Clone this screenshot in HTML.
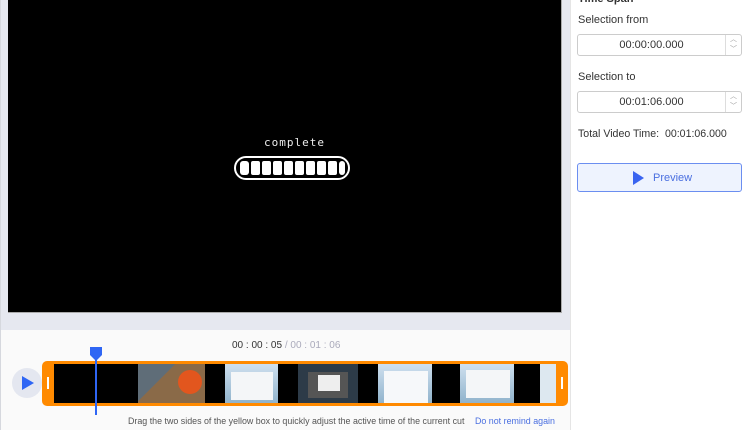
<!DOCTYPE html>
<html><head><style>
*{margin:0;padding:0;box-sizing:border-box}
body{width:750px;height:430px;overflow:hidden;background:#fff;font-family:"Liberation Sans",sans-serif;position:relative}
.abs{position:absolute}
.lbl{font-size:11px;color:#333}
.inp{position:absolute;left:577px;width:165px;height:22px;border:1px solid #ccc;border-radius:3px;background:#fff;font-size:11px;color:#333}
.inp span{position:absolute;left:0;width:147px;top:4px;text-align:center}
.inp i{position:absolute;right:0;top:0;width:16px;height:20px;border-left:1px solid #ddd;font-style:normal;font-size:7px;color:#999;line-height:10px;text-align:center}
</style></head><body>
<div class="abs" style="left:0;top:0;width:570px;height:330px;background:#e6e8f0;border-left:1px solid #d6d8de"></div>
<div class="abs" style="left:0;top:330px;width:570px;height:100px;background:#fafafa;border-left:1px solid #d6d8de"></div>
<div class="abs" style="left:8px;top:0;width:554px;height:313px;background:#000;border-right:1px solid #aaa;border-bottom:1px solid #aaa"></div>
<div class="abs" style="left:264px;top:136px;color:#eee;font-size:11px;font-family:'DejaVu Sans Mono',monospace;letter-spacing:1px">complete</div>
<svg class="abs" style="left:233px;top:155px" width="118" height="26"><rect x="2" y="2" width="114" height="22" rx="11" fill="none" stroke="#fff" stroke-width="2"/><g fill="#fff"><rect x="7" y="6" width="9" height="14" rx="3"/><rect x="18" y="6" width="9" height="14" rx="2"/><rect x="29" y="6" width="9" height="14" rx="2"/><rect x="40" y="6" width="9" height="14" rx="2"/><rect x="51" y="6" width="9" height="14" rx="2"/><rect x="62" y="6" width="9" height="14" rx="2"/><rect x="73" y="6" width="9" height="14" rx="2"/><rect x="84" y="6" width="9" height="14" rx="2"/><rect x="95" y="6" width="9" height="14" rx="2"/><rect x="106" y="6" width="6" height="14" rx="3"/></g></svg>

<div class="abs" style="left:570px;top:0;width:1px;height:430px;background:#e5e5e5"></div>
<div class="abs" style="left:578px;top:-7px;font-size:11px;font-weight:bold;color:#333">Time Span</div>
<div class="abs lbl" style="left:578px;top:14px">Selection from</div>
<div class="inp" style="top:34px"><span>00:00:00.000</span><i>︿<br>﹀</i></div>
<div class="abs lbl" style="left:578px;top:71px">Selection to</div>
<div class="inp" style="top:91px"><span>00:01:06.000</span><i>︿<br>﹀</i></div>
<div class="abs lbl" style="left:578px;top:128px;font-size:10.6px">Total Video Time:&nbsp; 00:01:06.000</div>
<div class="abs" style="left:577px;top:163px;width:165px;height:29px;border:1px solid #6b8ef0;border-radius:3px;background:#eef3fe;color:#4a6fe0;font-size:11px">
<svg class="abs" style="left:54px;top:7px" width="12" height="14"><path d="M1 0L12 7L1 14Z" fill="#3a64f0"/></svg>
<span class="abs" style="left:75px;top:8px">Preview</span></div>

<div class="abs" style="left:232px;top:340px;font-size:10px;color:#333">00 : 00 : 05 <span style="color:#aab">/ 00 : 01 : 06</span></div>
<div class="abs" style="left:12px;top:368px;width:30px;height:30px;border-radius:50%;background:#e4e7f0"></div>
<svg class="abs" style="left:22px;top:376px" width="12" height="14"><path d="M0 0L12 7L0 14Z" fill="#2f66f4"/></svg>
<div class="abs" style="left:42px;top:361px;width:526px;height:45px;background:#ff8a00;border-radius:5px"></div>
<div class="abs" style="left:47px;top:377px;width:2px;height:12px;background:#fff"></div>
<div class="abs" style="left:561px;top:377px;width:2px;height:12px;background:#fff"></div>
<div class="abs" style="left:54px;top:364px;width:502px;height:39px;background:#000;overflow:hidden">
<div class="abs" style="left:84px;top:0;width:67px;height:39px;background:linear-gradient(135deg,#5f6d78 0 35%,#8a6a48 35%)"></div>
<div class="abs" style="left:124px;top:6px;width:24px;height:24px;border-radius:50%;background:#e2561e"></div>
<div class="abs" style="left:171px;top:0;width:53px;height:39px;background:linear-gradient(#cfe0ef,#90b3cc)"></div>
<div class="abs" style="left:177px;top:8px;width:42px;height:28px;background:#f4f6f8"></div>
<div class="abs" style="left:244px;top:0;width:60px;height:39px;background:#2d3b48"></div>
<div class="abs" style="left:254px;top:8px;width:40px;height:26px;background:#555"></div>
<div class="abs" style="left:264px;top:11px;width:22px;height:16px;background:#eee"></div>
<div class="abs" style="left:324px;top:0;width:54px;height:39px;background:linear-gradient(#cfe0ef,#90b3cc)"></div>
<div class="abs" style="left:330px;top:7px;width:44px;height:32px;background:#f6f8fa"></div>
<div class="abs" style="left:406px;top:0;width:54px;height:39px;background:linear-gradient(#cfe0ef,#90b3cc)"></div>
<div class="abs" style="left:412px;top:6px;width:44px;height:28px;background:#f4f6f8"></div>
<div class="abs" style="left:486px;top:0;width:16px;height:39px;background:#dde8f0"></div>
</div>
<div class="abs" style="left:95px;top:358px;width:2px;height:57px;background:#2f66f4"></div>
<svg class="abs" style="left:90px;top:347px" width="12" height="14"><path d="M0 0H12V8L6 14L0 8Z" fill="#2f66f4"/></svg>
<div class="abs" style="left:128px;top:416px;font-size:8.9px;color:#555;white-space:nowrap">Drag the two sides of the yellow box to quickly adjust the active time of the current cut</div>
<div class="abs" style="left:475px;top:416px;font-size:8.9px;color:#4a6fe0;white-space:nowrap">Do not remind again</div>
</body></html>
